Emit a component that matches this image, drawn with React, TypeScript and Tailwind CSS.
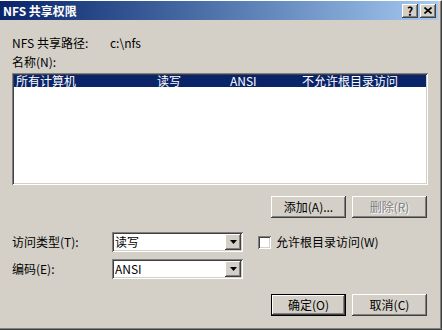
import React from "react";

const raised =
  "shadow-[inset_-1px_-1px_0_#404040,inset_1px_1px_0_#ffffff,inset_-2px_-2px_0_#808080,inset_2px_2px_0_#d4d0c8]";
const sunken =
  "shadow-[inset_1px_1px_0_#808080,inset_-1px_-1px_0_#ffffff,inset_2px_2px_0_#404040,inset_-2px_-2px_0_#d4d0c8]";

function DropArrow() {
  return (
    <svg width="7" height="4" viewBox="0 0 7 4">
      <polygon points="0,0 7,0 3.5,4" fill="#000" />
    </svg>
  );
}

function Combo({ value }: { value: string }) {
  return (
    <div className={`w-[131px] h-[20px] bg-white flex items-center p-[2px] ${sunken}`}>
      <span className="flex-1 pl-[1px] leading-[14px]">{value}</span>
      <div className={`w-[16px] h-[16px] bg-[#d4d0c8] flex items-center justify-center ${raised}`}>
        <DropArrow />
      </div>
    </div>
  );
}

function Button({
  label,
  disabled,
  primary,
}: {
  label: string;
  disabled?: boolean;
  primary?: boolean;
}) {
  const bevel = primary
    ? "border border-black shadow-[inset_-1px_-1px_0_#404040,inset_1px_1px_0_#ffffff,inset_-2px_-2px_0_#808080]"
    : raised;
  return (
    <div
      className={`w-[75px] h-[22px] bg-[#d4d0c8] flex items-center justify-center leading-[14px] ${bevel} ${
        disabled ? "text-[#808080] [text-shadow:1px_1px_0_#ffffff]" : "text-black"
      }`}
    >
      {label}
    </div>
  );
}

export default function App() {
  return (
    <div className="w-[442px] h-[330px] bg-[#d4d0c8] border-t border-t-white border-r border-r-[#404040] border-b border-b-[#404040] overflow-hidden text-[12px] text-black font-['Noto_Sans_CJK_SC',sans-serif]">
      <div className="h-full flex flex-col border-r border-r-[#808080] border-b border-b-[#808080] pr-[2px]">
        {/* title bar */}
        <div className="h-[19px] shrink-0 flex items-center bg-linear-to-r from-[#0a246a] to-[#a6caf0] pl-[3px] pr-[2px]">
          <span className="flex-1 font-bold text-white leading-[14px]">NFS 共享权限</span>
          <div className="flex gap-[2px]">
            <div className={`w-[16px] h-[14px] bg-[#d4d0c8] flex items-center justify-center font-bold text-[12px] leading-[12px] ${raised}`}>
              ?
            </div>
            <div className={`w-[16px] h-[14px] bg-[#d4d0c8] flex items-center justify-center ${raised}`}>
              <svg width="8" height="7" viewBox="0 0 8 7">
                <path d="M0.5 0.5 L7.5 6.5 M7.5 0.5 L0.5 6.5" stroke="#000" strokeWidth="1.6" />
              </svg>
            </div>
          </div>
        </div>

        <div className="flex-1 flex flex-col pl-[12px] pr-[10px]">
          <div className="mt-[16px] flex leading-[14px]">
            <span className="w-[98px]">NFS 共享路径:</span>
            <span>{"c:\\nfs"}</span>
          </div>
          <div className="mt-[5px] leading-[14px]">名称(N):</div>

          {/* list */}
          <div className={`mt-[4px] h-[112px] bg-white p-[2px] ${sunken}`}>
            <div className="h-[12px] bg-[#0a246a] text-white grid grid-cols-[141px_73px_72px_1fr] pl-[2px] leading-[12px]">
              <span>所有计算机</span>
              <span>读写</span>
              <span>ANSI</span>
              <span>不允许根目录访问</span>
            </div>
          </div>

          <div className="mt-[11px] flex justify-end gap-[6px] pr-[1px]">
            <Button label="添加(A)..." />
            <Button label="删除(R)" disabled />
          </div>

          <div className="mt-[14px] flex items-center">
            <span className="w-[100px] leading-[14px]">访问类型(T):</span>
            <Combo value="读写" />
            <div className="ml-[15px] w-[13px] h-[13px] bg-white shadow-[inset_1px_1px_0_#808080,inset_-1px_-1px_0_#ffffff,inset_2px_2px_0_#404040,inset_-2px_-2px_0_#d4d0c8]" />
            <span className="ml-[5px] leading-[14px]">允许根目录访问(W)</span>
          </div>

          <div className="mt-[7px] flex items-center">
            <span className="w-[100px] leading-[14px]">编码(E):</span>
            <Combo value="ANSI" />
          </div>

          <div className="mt-[15px] flex justify-end gap-[6px] pr-[1px]">
            <Button label="确定(O)" primary />
            <Button label="取消(C)" />
          </div>
        </div>
      </div>
    </div>
  );
}
